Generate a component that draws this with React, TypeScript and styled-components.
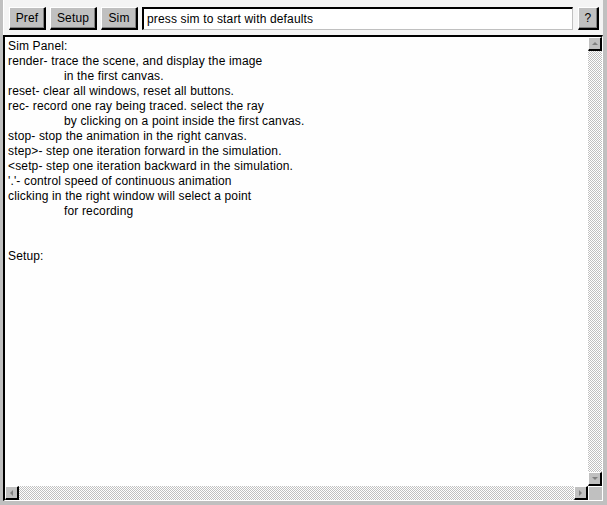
import React from "react";
import styled, { createGlobalStyle } from "styled-components";

const Global = createGlobalStyle`
  html, body { margin: 0; padding: 0; background: #c0c0c0; }
  #root { width: 607px; height: 505px; }
`;

const Frame = styled.div`
  width: 607px;
  height: 505px;
  box-sizing: border-box;
  background: #c0c0c0;
  padding: 0 4px 4px 3px;
  display: flex;
  flex-direction: column;
  font-family: "Liberation Sans", Arial, sans-serif;
  font-size: 12px;
  letter-spacing: 0.15px;
  color: #000;
`;

const Toolbar = styled.div`
  height: 35px;
  flex: none;
  box-sizing: border-box;
  background: #f4f4f4;
  border-left: 1px solid #ffffff;
  display: flex;
  align-items: flex-start;
  gap: 4px;
  padding: 7px 4px 0 5px;
`;

const Button = styled.button<{ $w: number }>`
  width: ${(p) => p.$w}px;
  height: 23px;
  flex: none;
  box-sizing: border-box;
  padding: 0;
  margin: 0;
  background: #c0c0c0;
  font-family: "Liberation Sans", Arial, sans-serif;
  font-size: 12px;
  letter-spacing: 0.15px;
  color: #000;
  border-style: solid;
  border-width: 1px 2px 2px 1px;
  border-color: #ffffff #000000 #000000 #ffffff;
  box-shadow: inset -1px -1px 0 #808080;
  display: flex;
  align-items: center;
  justify-content: center;
`;

const Field = styled.div`
  flex: 1;
  height: 23px;
  margin-right: 1px;
  box-sizing: border-box;
  background: #ffffff;
  border-style: solid;
  border-width: 2px 1px 1px 2px;
  border-color: #000000 #c0c0c0 #c0c0c0 #000000;
  display: flex;
  align-items: center;
  padding-left: 3px;
  white-space: nowrap;
  overflow: hidden;
`;

const Panel = styled.div`
  flex: 1;
  min-height: 0;
  box-sizing: border-box;
  border-style: solid;
  border-width: 2px 1px 1px 2px;
  border-color: #000000 #ffffff #ffffff #000000;
  background: #fefefe;
  display: grid;
  grid-template-columns: 1fr 14px;
  grid-template-rows: 1fr 14px;
`;

const TextArea = styled.div`
  padding: 2px 0 0 3px;
  line-height: 15px;
  overflow: hidden;
  white-space: pre;
`;

const Line = styled.div<{ $indent?: boolean }>`
  height: 15px;
  padding-left: ${(p) => (p.$indent ? 56 : 0)}px;
`;

const Track = styled.div<{ $vertical?: boolean }>`
  display: flex;
  flex-direction: ${(p) => (p.$vertical ? "column" : "row")};
  justify-content: space-between;
  background: repeating-conic-gradient(#c0c0c0 0 25%, #ffffff 0 50%) 0 0 / 2px 2px;
`;

const ArrowBtn = styled.div`
  width: 14px;
  height: 14px;
  box-sizing: border-box;
  background: #c0c0c0;
  border-style: solid;
  border-width: 1px 2px 2px 1px;
  border-color: #ffffff #000000 #000000 #ffffff;
  display: flex;
  align-items: center;
  justify-content: center;
`;

const Corner = styled.div`
  background: #c0c0c0;
  border-top: 1px solid #ffffff;
  border-left: 1px solid #ffffff;
`;

type Dir = "up" | "down" | "left" | "right";
const Tri = ({ dir }: { dir: Dir }) => {
  const pts: Record<Dir, string> = {
    up: "1,5 4,2 7,5",
    down: "1,2 4,5 7,2",
    left: "5,1 2,4 5,7",
    right: "2,1 5,4 2,7",
  };
  return (
    <svg width="8" height="8" viewBox="0 0 8 8">
      <polygon points={pts[dir]} fill="#808080" />
    </svg>
  );
};

const lines: { t: string; i?: boolean }[] = [
  { t: "Sim Panel:" },
  { t: "render- trace the scene, and display the image" },
  { t: "in the first canvas.", i: true },
  { t: "reset- clear all windows, reset all buttons." },
  { t: "rec- record one ray being traced. select the ray" },
  { t: "by clicking on a point inside the first canvas.", i: true },
  { t: "stop- stop the animation in the right canvas." },
  { t: "step>- step one iteration forward in the simulation." },
  { t: "<setp- step one iteration backward in the simulation." },
  { t: "'.'- control speed of continuous animation" },
  { t: "clicking in the right window will select a point" },
  { t: "for recording", i: true },
  { t: "" },
  { t: "" },
  { t: "Setup:" },
];

export default function App() {
  return (
    <Frame>
      <Global />
      <Toolbar>
        <Button $w={37}>Pref</Button>
        <Button $w={47}>Setup</Button>
        <Button $w={37}>Sim</Button>
        <Field>press sim to start with defaults</Field>
        <Button $w={21}>?</Button>
      </Toolbar>
      <Panel>
        <TextArea>
          {lines.map((l, k) => (
            <Line key={k} $indent={l.i}>
              {l.t}
            </Line>
          ))}
        </TextArea>
        <Track $vertical>
          <ArrowBtn>
            <Tri dir="up" />
          </ArrowBtn>
          <ArrowBtn>
            <Tri dir="down" />
          </ArrowBtn>
        </Track>
        <Track>
          <ArrowBtn>
            <Tri dir="left" />
          </ArrowBtn>
          <ArrowBtn>
            <Tri dir="right" />
          </ArrowBtn>
        </Track>
        <Corner />
      </Panel>
    </Frame>
  );
}
